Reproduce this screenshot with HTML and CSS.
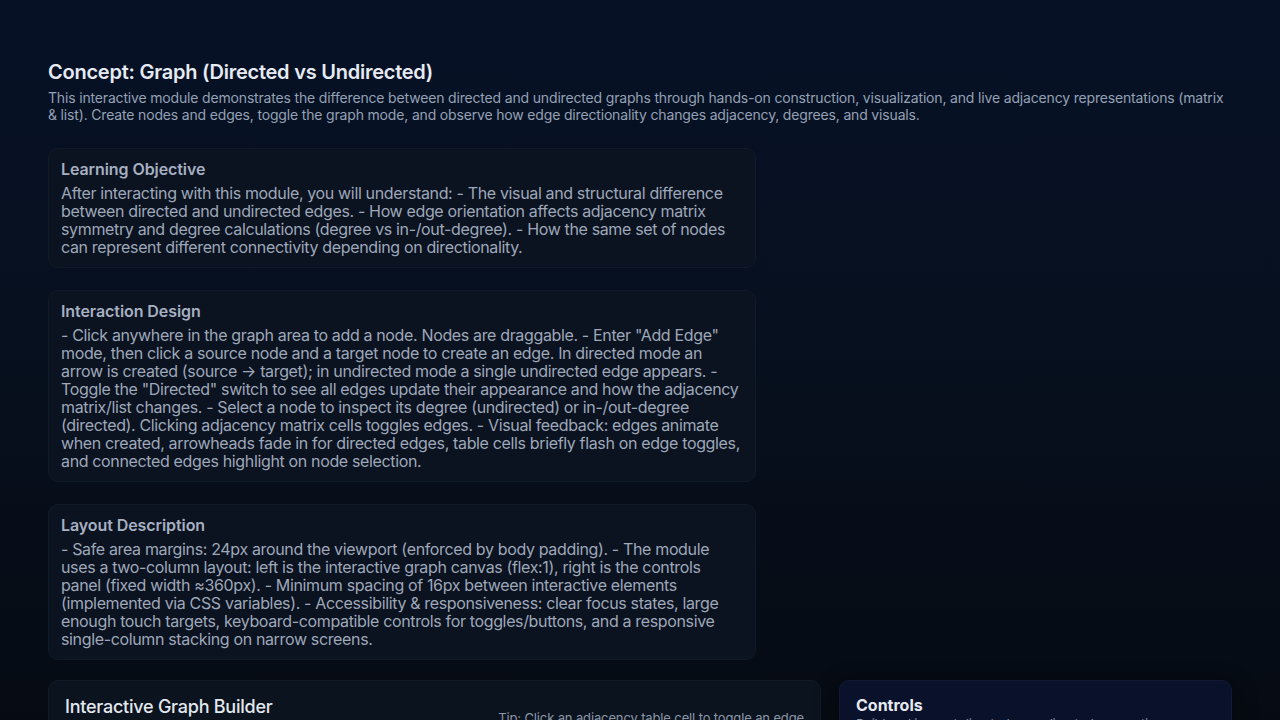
FILE: index.html
```html
<!DOCTYPE html>
<html lang="en">
<head>
<meta charset="utf-8">
<title>Concept: Graph (Directed vs Undirected)</title>
<link rel="stylesheet" href="styles.css">
</head>
<body>
<main class="module">
  <header class="intro">
    <h1 class="title">Concept: Graph (Directed vs Undirected)</h1>
    <p class="lead">This interactive module demonstrates the difference between directed and undirected graphs through hands-on construction, visualization, and live adjacency representations (matrix &amp; list). Create nodes and edges, toggle the graph mode, and observe how edge directionality changes adjacency, degrees, and visuals.</p>
  </header>

  <div class="info-list">
    <section class="info-card">
      <h2 class="info-title">Learning Objective</h2>
      <p class="info-text">After interacting with this module, you will understand: - The visual and structural difference between directed and undirected edges. - How edge orientation affects adjacency matrix symmetry and degree calculations (degree vs in-/out-degree). - How the same set of nodes can represent different connectivity depending on directionality.</p>
    </section>

    <section class="info-card">
      <h2 class="info-title">Interaction Design</h2>
      <p class="info-text">- Click anywhere in the graph area to add a node. Nodes are draggable. - Enter "Add Edge" mode, then click a source node and a target node to create an edge. In directed mode an arrow is created (source → target); in undirected mode a single undirected edge appears. - Toggle the "Directed" switch to see all edges update their appearance and how the adjacency matrix/list changes. - Select a node to inspect its degree (undirected) or in-/out-degree (directed). Clicking adjacency matrix cells toggles edges. - Visual feedback: edges animate when created, arrowheads fade in for directed edges, table cells briefly flash on edge toggles, and connected edges highlight on node selection.</p>
    </section>

    <section class="info-card">
      <h2 class="info-title">Layout Description</h2>
      <p class="info-text">- Safe area margins: 24px around the viewport (enforced by body padding). - The module uses a two-column layout: left is the interactive graph canvas (flex:1), right is the controls panel (fixed width ≈360px). - Minimum spacing of 16px between interactive elements (implemented via CSS variables). - Accessibility &amp; responsiveness: clear focus states, large enough touch targets, keyboard-compatible controls for toggles/buttons, and a responsive single-column stacking on narrow screens.</p>
    </section>
  </div>

  <div class="workspace">
    <section class="builder">
      <div class="builder-head">
        <h2 class="builder-title">Interactive Graph Builder</h2>
        <span class="tip">Tip: Click an adjacency table cell to toggle an edge</span>
      </div>
      <div class="canvas"></div>
    </section>
    <aside class="controls">
      <h2 class="controls-title">Controls</h2>
      <p class="controls-sub">Build and inspect directed vs undirected connections.</p>
    </aside>
  </div>
</main>
</body>
</html>
```
FILE: styles.css
```css
* { box-sizing: border-box; }

html {
  background-color: #060b13;
  background-image: linear-gradient(180deg, #061126 0%, #07101f 45%, #060b13 100%);
  background-size: 100% 720px;
  background-repeat: no-repeat;
}

body {
  margin: 0;
  padding: 24px;
  font-family: Inter, "Noto Sans", "DejaVu Sans", sans-serif;
  letter-spacing: -0.015em;
  color: #9aa5b7;
}

.module {
  padding: 24px;
}

.intro {
  padding-top: 12px;
  margin-bottom: 25px;
}

.title {
  margin: 0;
  font-size: 20px;
  line-height: 24px;
  font-weight: 600;
  color: #e6ebf3;
}

.lead {
  margin: 5px 0 0;
  font-size: 14px;
  line-height: 17px;
  letter-spacing: -0.012em;
  color: #95a1b4;
}

.info-list {
  display: flex;
  flex-direction: column;
  align-items: flex-start;
  gap: 22px;
  margin-bottom: 20px;
}

.info-card {
  width: 708px;
  padding: 10px 13px 11px 12px;
  background: #0b1220;
  border: 1px solid #111a28;
  border-radius: 10px;
}

.info-title {
  margin: 0 0 5px;
  font-size: 16px;
  line-height: 20px;
  font-weight: 600;
  letter-spacing: -0.005em;
  color: #a6b0c0;
}

.info-text {
  margin: 0;
  font-size: 16px;
  line-height: 18px;
  letter-spacing: -0.022em;
  color: #9ea8b9;
}

.workspace {
  display: flex;
  gap: 18px;
  align-items: flex-start;
}

.builder {
  flex: 1;
  padding: 14px 16px 16px;
  background: #0b131e;
  border: 1px solid #111b27;
  border-radius: 10px;
}

.builder-head {
  display: flex;
  justify-content: space-between;
  align-items: flex-end;
}

.builder-title {
  margin: 0;
  font-size: 18px;
  line-height: 24px;
  font-weight: 500;
  color: #e3e8ef;
}

.tip {
  font-size: 13px;
  line-height: 16px;
  letter-spacing: -0.01em;
  color: #8d97a8;
  margin-bottom: -7px;
}

.canvas {
  margin-top: 16px;
  height: 420px;
  border-radius: 8px;
  background: #08101b;
  border: 1px solid #111b27;
}

.controls {
  width: 393px;
  padding: 14px 16px 16px;
  background: #09112b;
  border: 1px solid #121a33;
  border-radius: 10px;
  box-shadow: 0 6px 24px rgba(0, 0, 0, 0.45);
}

.controls-title {
  margin: 0;
  font-size: 16px;
  line-height: 20px;
  font-weight: 700;
  letter-spacing: 0;
  color: #e6eaf2;
}

.controls-sub {
  margin: 1px 0 0;
  font-size: 13px;
  line-height: 16px;
  color: #8a94a8;
}
```
